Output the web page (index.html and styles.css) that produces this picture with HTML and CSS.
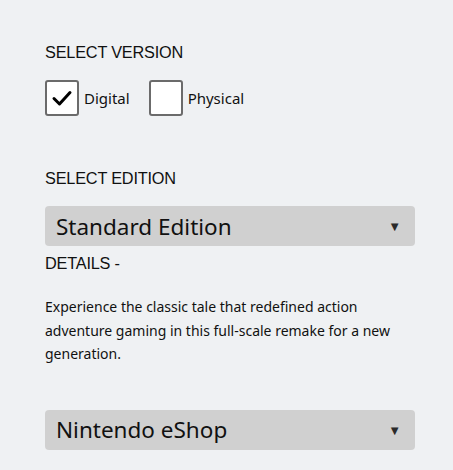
FILE: index.html
```html
<!DOCTYPE html>
<html lang="en">
<head>
    <meta charset="UTF-8">
    <meta name="viewport" content="width=device-width, initial-scale=1.0">
    <title>Select Version</title>
    <link rel="stylesheet" href="styles.css">
</head>
<body>
<div class="panel">
    <h2 class="label">SELECT VERSION</h2>
    <div class="versions">
        <label class="option">
            <span class="box checked">
                <svg width="22" height="22" viewBox="0 0 22 22"><path d="M3 11.5 L8.5 17 L19 5.5" fill="none" stroke="#000" stroke-width="3" stroke-linecap="round" stroke-linejoin="round"/></svg>
            </span>
            <span class="option-text">Digital</span>
        </label>
        <label class="option">
            <span class="box"></span>
            <span class="option-text">Physical</span>
        </label>
    </div>

    <h2 class="label edition">SELECT EDITION</h2>
    <div class="select">
        <span>Standard Edition</span>
        <span class="arrow">&#9660;</span>
    </div>

    <h2 class="label details">DETAILS -</h2>
    <p class="desc">Experience the classic tale that redefined action adventure gaming in this full-scale remake for a new generation.</p>

    <div class="select shop">
        <span>Nintendo eShop</span>
        <span class="arrow">&#9660;</span>
    </div>
</div>
</body>
</html>
```

FILE: styles.css
```css
* {
    margin: 0;
    padding: 0;
    box-sizing: border-box;
}

html, body {
    width: 100%;
    height: 100%;
    overflow: hidden;
}

body {
    background: #eff1f3;
    font-family: "Noto Sans", "Liberation Sans", sans-serif;
    color: #111;
}

.panel {
    padding: 42px 38px 0 45px;
}

.label {
    font-family: "Liberation Sans", Arial, sans-serif;
    font-weight: normal;
    font-size: 16.3px;
    line-height: 20px;
    color: #111;
    letter-spacing: -0.2px;
}

.versions {
    display: flex;
    gap: 19px;
    margin-top: 18px;
}

.option {
    display: flex;
    align-items: center;
    gap: 5px;
}

.box {
    width: 34px;
    height: 36px;
    border: 2.5px solid #6b6b6b;
    border-radius: 3px;
    background: #fff;
    display: flex;
    align-items: center;
    justify-content: center;
}

.option-text {
    font-size: 15px;
}

.edition {
    margin-top: 52px;
}

.select {
    margin-top: 18px;
    height: 40px;
    background: #d0d0d0;
    border-radius: 4px;
    display: flex;
    align-items: center;
    justify-content: space-between;
    padding: 0 14px 0 11px;
    font-size: 22.5px;
    color: #111;
}

.arrow {
    font-size: 13px;
    color: #2a2a2a;
}

.details {
    margin-top: 7px;
}

.desc {
    margin-top: 22px;
    font-size: 14px;
    line-height: 23.5px;
}

.shop {
    margin-top: 44px;
}
```
